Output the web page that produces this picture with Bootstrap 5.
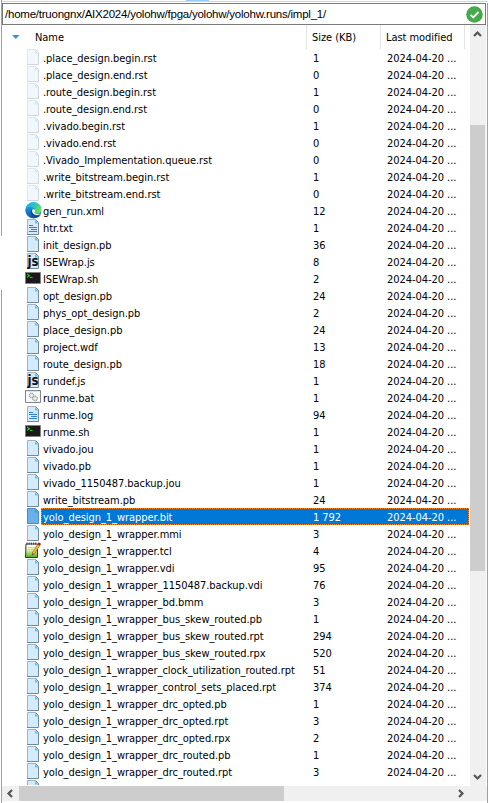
<!DOCTYPE html>
<html lang="en">
<head>
<meta charset="utf-8">
<meta name="viewport" content="width=device-width, initial-scale=1">
<title>impl_1</title>
<link href="https://cdn.jsdelivr.net/npm/bootstrap@5.3.0/dist/css/bootstrap.min.css" rel="stylesheet">
<style>
body{height:803px;background:#fff;color:#000;font:11px/17px "DejaVu Sans Condensed","DejaVu Sans",sans-serif;font-stretch:condensed;letter-spacing:-.05px}
.pane{height:803px;padding:0 1px 2px 2px;background:linear-gradient(#a0a0a0,#a0a0a0) 1px 0/1px 236px no-repeat,linear-gradient(#a0a0a0,#a0a0a0) 1px 290px/1px 513px no-repeat,linear-gradient(#a0a0a0,#a0a0a0) 487px 0/1px 803px no-repeat}
.topstrip{height:3px;background:linear-gradient(#99cdf8,#99cdf8) 184px 0/23px 1px no-repeat,linear-gradient(#d5d5d5,#d5d5d5) 0 1px/100% 1px no-repeat,#fff}
.address{height:22px;width:484px;border:1px solid #7a7a7a;font-family:"Liberation Sans",Arial,sans-serif;font-size:11.5px;line-height:20px;padding-left:2px;letter-spacing:-.23px}
.ok{width:17px;height:17px;margin-right:2px}
.main{height:761px}
.files{width:467px}
.heads{height:24px;line-height:25px}
.sortmark{width:33px;padding-left:10px}
.c-size{width:74px}
.c-date{width:89px}
.heads .c-size,.heads .c-date{border-left:1px solid #e3e3e3;padding-left:5px}
.heads .c-date{width:85px;margin-right:4px;border-right:1px solid #e3e3e3}
.listing{height:736px}
.file{height:17px;flex:none;line-height:19px}
.iconbox{width:39px;padding-left:22px}
.iconbox svg{display:block;width:17px;height:17px}
.file .c-name{padding-left:2px}
.file .c-size{padding-left:7px}
.file .c-date{padding-left:7px}
.fill{height:17px}
.chosen .fill{background:#0078d7;color:#fff;outline:1px dotted #ff8728;outline-offset:-1px}
.faded svg{opacity:.32}
.vbar{width:16px;background:#f0f0f0;margin-left:1px}
.vthumb{height:446px;width:15px;margin-top:84px;background:#cdcdcd}
.hbar{height:15px;width:485px;background:#f0f0f0}
.hthumb{width:265px;background:#cdcdcd}
.js-mark{font:bold 14px "DejaVu Sans Condensed","DejaVu Sans",sans-serif;font-stretch:condensed}
</style>
</head>
<body class="overflow-hidden">
<svg width="0" height="0" class="position-absolute" aria-hidden="true">
<defs>
<g id="page"><path d="M3.5.5h8l3 3v12h-11z" fill="#d3ebfd"/><path d="M3.5 15.500V.5h8" fill="none" stroke="#a3b3c0"/><path d="M11.500.5l3 3v12h-11.500" fill="none" stroke="#71879a"/><path d="M11 1v3.500h3.500z" fill="#5cc5ee"/></g>
<linearGradient id="edgeBlue" x1="0" y1="0" x2="0" y2="1"><stop offset="0" stop-color="#35c1f1"/><stop offset=".5" stop-color="#1482d3"/><stop offset="1" stop-color="#0c59a4"/></linearGradient>
<linearGradient id="edgeGreen" x1="0" y1="0" x2="1" y2=".4"><stop offset="0" stop-color="#1eaee5"/><stop offset=".55" stop-color="#2cc3c0"/><stop offset="1" stop-color="#6be04c"/></linearGradient>
<linearGradient id="noteGreen" x1="0" y1="0" x2="0" y2="1"><stop offset=".1" stop-color="#fff"/><stop offset=".5" stop-color="#d5eaa0"/><stop offset="1" stop-color="#4fae17"/></linearGradient>
</defs>
</svg>
<div class="pane d-flex flex-column">
  <div class="topstrip"></div>
  <div class="address d-flex align-items-center justify-content-between">
    <span>/home/truongnx/AIX2024/yolohw/fpga/yolohw/yolohw.runs/impl_1/</span>
    <svg class="ok" viewBox="0 0 17 17"><circle cx="8.500" cy="8.500" r="8.300" fill="#45aa4b"/><path d="M4.500 8.800l2.700 2.700 5.300-5.500" fill="none" stroke="#fff" stroke-width="1.900"/></svg>
  </div>
  <div class="main d-flex">
    <div class="files">
      <div class="heads d-flex">
        <div class="sortmark"><svg class="d-block mt-2" width="8" height="8" viewBox="0 0 8 8"><path d="M0 2h7.500L3.750 6z" fill="#2696ec"/></svg></div>
        <div class="flex-grow-1">Name</div><div class="c-size">Size (KB)</div><div class="c-date">Last modified</div>
      </div>
      <div class="listing overflow-hidden d-flex flex-column" id="listing"></div>
    </div>
    <div class="vbar d-flex flex-column">
      <svg width="15" height="16"><path d="M4 11l3.500-3.500L11 11" fill="none" stroke="#555" stroke-width="2.200"/></svg>
      <div class="vthumb"></div>
      <svg class="mt-auto" width="15" height="16"><path d="M4 5l3.500 3.500L11 5" fill="none" stroke="#555" stroke-width="2.200"/></svg>
    </div>
  </div>
  <div class="hbar d-flex">
    <svg width="17" height="15"><path d="M10 4L6.500 7.500L10 11" fill="none" stroke="#555" stroke-width="2.200"/></svg>
    <div class="hthumb"></div>
    <svg class="ms-auto me-3" width="15" height="15"><path d="M3 4l3.500 3.500L3 11" fill="none" stroke="#555" stroke-width="2.200"/></svg>
  </div>
</div>
<script src="https://cdn.jsdelivr.net/npm/bootstrap@5.3.0/dist/js/bootstrap.bundle.min.js"></script>
<script>
const base = '<use href="#page"/>';
const icons = {
  page: base,
  faded: base,
  chosen: '<path d="M3.500.500h8l3 3v12h-11z" fill="#69b1ea" stroke="#5588b8"/><path d="M11 1v3.500h3.500z" fill="#2f9fe3"/>',
  text: base + '<path d="M5 6.500h4M5 8.500h8M7 10.500h6M5 12.500h8" stroke="#2f7fd6"/>',
  js: base + '<text class="js-mark" x="3.500" y="12.500" textLength="11" lengthAdjust="spacingAndGlyphs" fill="#111">js</text>',
  edge: '<circle cx="9.500" cy="8.300" r="8.200" fill="url(#edgeBlue)"/><path d="M2 5C5-1 15-1.500 17.500 6c1 4-2 6-5 5.700-2-.2-2.500-1-1.700-2C12 7 9 4.500 6 4.500 4 4.500 2.500 5.300 1.500 7z" fill="url(#edgeGreen)"/><path d="M8 7c-3 3-1 7 3 8.500 2 .5 4-.5 5.500-2-5 1.500-9-1-8.500-6.500z" fill="#114a8b"/><path d="M8.500 7.500c-1 2.500.5 5.500 4 5.500 2.500 0 4-.8 5-2-1.500 1-4 1.200-5.500.7-1.700-.5-1.800-1.300-1-2.200.5-1.500-1-3-2.500-2z" fill="#fff"/>',
  shell: '<path d="M1.500 2.500h15v11h-15z" fill="#191919" stroke="#808080"/><path d="M3 4l2.500 1.700L3 7.300M6 7.500h2.500" fill="none" stroke="#16d321" stroke-width="1.100"/>',
  bat: '<path d="M1.500 1.500h15v12h-15z" fill="#fafafa" stroke="#7d8791"/><path d="M2 2.500h14" stroke="#dce5ec"/><circle cx="7.500" cy="6.500" r="2.400" fill="#ddd" stroke="#899197" stroke-dasharray="1.200 .5"/><circle cx="11" cy="9.500" r="2.400" fill="#ddd" stroke="#899197" stroke-dasharray="1.200 .5"/><circle cx="7.500" cy="6.500" r=".7" fill="#fff"/><circle cx="11" cy="9.500" r=".7" fill="#fff"/>',
  note: '<path d="M2 2h11.500v13.500H1.500z" fill="url(#noteGreen)" stroke="#343434"/><path d="M2.500 1.500h11" stroke="#333" stroke-width="2" stroke-dasharray="1 1.200"/><path d="M4 5.500h7M4 7.500h6" stroke="#c2c7bc" stroke-width=".7"/><path d="M15 2.500L9 12" stroke="#9b5a0b" stroke-width="3"/><path d="M15 2.500L9.300 11.500" stroke="#f7bb22" stroke-width="1.900"/><path d="M15.900 1l-1.200 2" stroke="#9b2422" stroke-width="2.800"/><path d="M9 12l-.8 1.300" stroke="#333"/>'
};
// name | size | icon
const files = `.place_design.begin.rst|1|faded
.place_design.end.rst|0|faded
.route_design.begin.rst|1|faded
.route_design.end.rst|0|faded
.vivado.begin.rst|1|faded
.vivado.end.rst|0|faded
.Vivado_Implementation.queue.rst|0|faded
.write_bitstream.begin.rst|1|faded
.write_bitstream.end.rst|0|faded
gen_run.xml|12|edge
htr.txt|1|text
init_design.pb|36
ISEWrap.js|8|js
ISEWrap.sh|2|shell
opt_design.pb|24
phys_opt_design.pb|2
place_design.pb|24
project.wdf|13
route_design.pb|18
rundef.js|1|js
runme.bat|1|bat
runme.log|94|text
runme.sh|1|shell
vivado.jou|1
vivado.pb|1
vivado_1150487.backup.jou|1
write_bitstream.pb|24
yolo_design_1_wrapper.bit|1 792|chosen
yolo_design_1_wrapper.mmi|3
yolo_design_1_wrapper.tcl|4|note
yolo_design_1_wrapper.vdi|95
yolo_design_1_wrapper_1150487.backup.vdi|76
yolo_design_1_wrapper_bd.bmm|3
yolo_design_1_wrapper_bus_skew_routed.pb|1
yolo_design_1_wrapper_bus_skew_routed.rpt|294
yolo_design_1_wrapper_bus_skew_routed.rpx|520
yolo_design_1_wrapper_clock_utilization_routed.rpt|51
yolo_design_1_wrapper_control_sets_placed.rpt|374
yolo_design_1_wrapper_drc_opted.pb|1
yolo_design_1_wrapper_drc_opted.rpt|3
yolo_design_1_wrapper_drc_opted.rpx|2
yolo_design_1_wrapper_drc_routed.pb|1
yolo_design_1_wrapper_drc_routed.rpt|3
yolo_design_1_wrapper_drc_routed.rpx|2`.split('\n').map(l => l.split('|'));
document.getElementById('listing').innerHTML = files.map(([name, size, kind = 'page']) =>
  `<div class="file d-flex ${kind}"><div class="iconbox"><svg viewBox="0 0 17 17">${icons[kind]}</svg></div>` +
  `<div class="fill d-flex flex-grow-1"><div class="c-name flex-grow-1 text-nowrap">${name}</div>` +
  `<div class="c-size">${size}</div><div class="c-date">2024-04-20 ...</div></div></div>`).join('');
</script>
</body>
</html>
